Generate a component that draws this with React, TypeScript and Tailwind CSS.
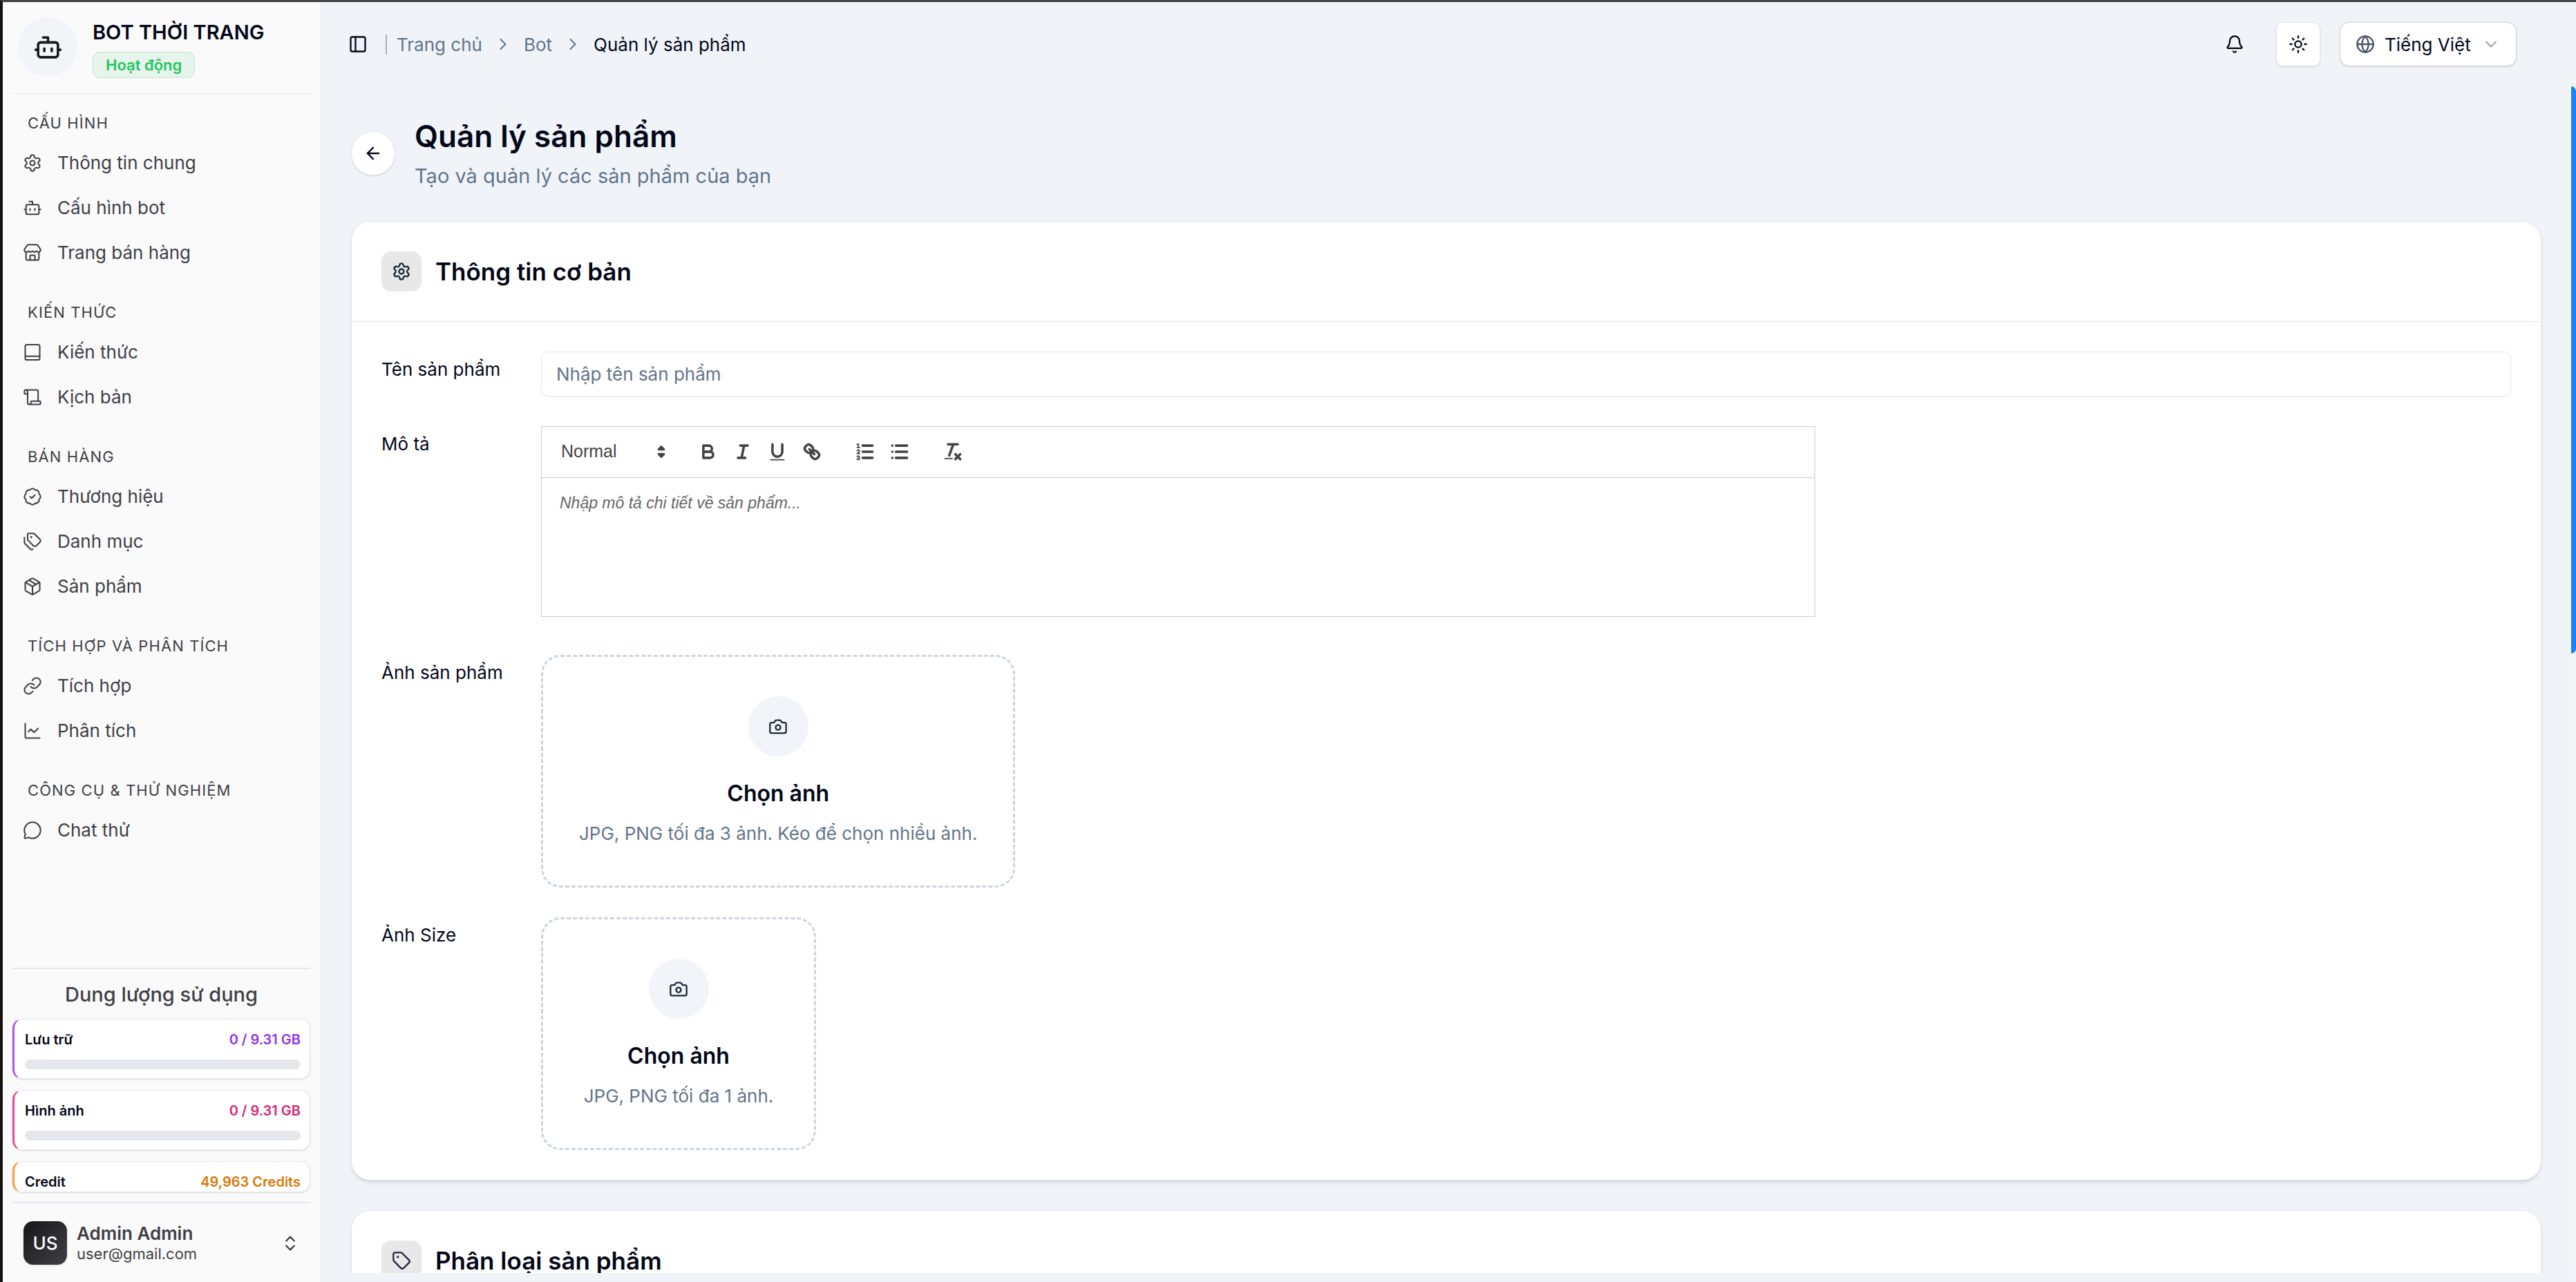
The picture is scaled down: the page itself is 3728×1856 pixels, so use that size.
import type { ReactNode } from "react";
import {
  ArrowLeft,
  BadgeCheck,
  Bell,
  Book,
  Bot,
  Camera,
  ChartLine,
  ChevronDown,
  ChevronRight,
  ChevronsUpDown,
  Globe,
  Link as LinkIcon,
  MessageCircle,
  Package,
  PanelLeft,
  Scroll,
  Settings,
  Store,
  Sun,
  Tag,
  Tags,
  type LucideIcon,
} from "lucide-react";

type NavItem = { label: string; icon: LucideIcon };

const navGroups: { title: string; items: NavItem[] }[] = [
  {
    title: "CẤU HÌNH",
    items: [
      { label: "Thông tin chung", icon: Settings },
      { label: "Cấu hình bot", icon: Bot },
      { label: "Trang bán hàng", icon: Store },
    ],
  },
  {
    title: "KIẾN THỨC",
    items: [
      { label: "Kiến thức", icon: Book },
      { label: "Kịch bản", icon: Scroll },
    ],
  },
  {
    title: "BÁN HÀNG",
    items: [
      { label: "Thương hiệu", icon: BadgeCheck },
      { label: "Danh mục", icon: Tags },
      { label: "Sản phẩm", icon: Package },
    ],
  },
  {
    title: "TÍCH HỢP VÀ PHÂN TÍCH",
    items: [
      { label: "Tích hợp", icon: LinkIcon },
      { label: "Phân tích", icon: ChartLine },
    ],
  },
  {
    title: "CÔNG CỤ & THỬ NGHIỆM",
    items: [{ label: "Chat thử", icon: MessageCircle }],
  },
];

/* Book with a straight spine line, used for the knowledge entry. */
function BookGlyph({ className }: { className?: string }) {
  return (
    <svg viewBox="0 0 24 24" fill="none" stroke="currentColor" strokeWidth={1.75} strokeLinecap="round" strokeLinejoin="round" className={className} aria-hidden="true">
      <rect x="3" y="2.5" width="18" height="19" rx="2" />
      <path d="M3.5 17H20.5" />
    </svg>
  );
}

function NavLink({ item }: { item: NavItem }) {
  const Icon = item.icon;
  return (
    <a href="#" className="flex h-[65px] items-center gap-[22px] pl-[15px] text-[26px] text-[#3f3f46]">
      {item.icon === Book ? <BookGlyph className="size-7 shrink-0" /> : <Icon className="size-7 shrink-0" strokeWidth={1.75} />}
      <span>{item.label}</span>
    </a>
  );
}

function UsageCard({ label, value, accent, valueColor }: { label: string; value: string; accent: string; valueColor: string }) {
  return (
    <div className={`rounded-[14px] border border-l-[3px] border-[#e2e8f0] bg-white pt-[14px] pr-[13px] pb-[13px] pl-[15px] shadow-sm ${accent}`}>
      <div className="flex items-center justify-between text-xl leading-[30px] font-semibold">
        <span className="text-[#020617]">{label}</span>
        <span className={valueColor}>{value}</span>
      </div>
      <div className="mt-[14px] h-[14px] rounded-full bg-[#e5e7eb]" />
    </div>
  );
}

function Sidebar() {
  return (
    <aside className="flex w-[461px] shrink-0 flex-col border-r border-[#e2e8f0] bg-[#fafafa] pr-[15px] pl-[14px]">
      <div className="flex items-center gap-[22px] border-b border-[#e4e6e8] px-2 pt-5 pb-[22px]">
        <span className="grid size-[86px] place-items-center rounded-full bg-[#f1f5f9] text-[#18181b]">
          <Bot className="size-[43px]" />
        </span>
        <div className="flex flex-col items-start gap-1">
          <h2 className="text-[29px] leading-[48px] font-semibold text-[#020617]">BOT THỜI TRANG</h2>
          <span className="flex h-[38px] items-center rounded-[10px] border border-[#bfe9cc] bg-[#e7f4ec] px-[18px] text-[22px] font-semibold text-[#22c55e]">
            Hoạt động
          </span>
        </div>
      </div>

      <nav className="flex min-h-0 flex-1 flex-col gap-[29px] overflow-hidden pt-[17px]">
        {navGroups.map((group) => (
          <section key={group.title}>
            <h3 className="pl-[22px] text-[22px] leading-[50px] tracking-wider text-[#3f3f46]">{group.title}</h3>
            {group.items.map((item) => (
              <NavLink key={item.label} item={item} />
            ))}
          </section>
        ))}
      </nav>

      <section className="border-t-2 border-[#e3e6ea] pt-[19px]">
        <h3 className="mb-[17px] text-center text-[29px] leading-9 font-medium text-[#3f3f46]">Dung lượng sử dụng</h3>
        <div className="flex flex-col gap-4">
          <UsageCard label="Lưu trữ" value="0 / 9.31 GB" accent="border-l-[#a855f7]" valueColor="text-[#9333ea]" />
          <UsageCard label="Hình ảnh" value="0 / 9.31 GB" accent="border-l-[#ec4899]" valueColor="text-[#db2777]" />
          <div className="h-[45px] rounded-[14px] border border-l-[3px] border-[#e2e8f0] border-l-[#fb9d3c] bg-white pt-[14px] pr-[13px] pl-[15px] shadow-sm">
            <div className="flex items-center justify-between text-xl leading-[30px] font-semibold">
              <span className="text-[#020617]">Credit</span>
              <span className="text-[#d97706]">49,963 Credits</span>
            </div>
          </div>
        </div>
      </section>

      <div className="mt-[14px] border-t-2 border-[#e2e8f0] pt-[26px] pb-[25px]">
        <button className="flex w-full items-center pr-[15px] pl-4 text-left text-[#3f3f46]">
          <span className="grid size-[63px] place-items-center rounded-[14px] bg-linear-to-br from-[#18181b] to-[#3f3f46] text-[26px] font-medium text-white shadow-sm">
            US
          </span>
          <span className="ml-[14px] flex flex-1 flex-col">
            <span className="text-[26px] leading-[30px] font-semibold">Admin Admin</span>
            <span className="text-[22px] leading-7">user@gmail.com</span>
          </span>
          <ChevronsUpDown className="size-7" />
        </button>
      </div>
    </aside>
  );
}

function TopBar() {
  return (
    <header className="flex h-[122px] shrink-0 items-center justify-between pr-[86px] pl-[39px]">
      <div className="flex items-center">
        <button aria-label="Thu gọn thanh bên" className="text-[#020617]">
          <PanelLeft className="size-7" />
        </button>
        <span className="mr-[14px] ml-[26px] h-[29px] w-[2px] bg-[#a3aebd]" />
        <nav aria-label="Breadcrumb" className="flex items-center gap-4 text-[26px] text-[#64748b]">
          <a href="#">Trang chủ</a>
          <ChevronRight className="size-7" strokeWidth={1.75} />
          <a href="#">Bot</a>
          <ChevronRight className="size-7" strokeWidth={1.75} />
          <span className="text-[#020617]">Quản lý sản phẩm</span>
        </nav>
      </div>
      <div className="flex items-center gap-7 text-[#020617]">
        <button aria-label="Thông báo" className="grid size-16 place-items-center">
          <Bell className="size-7" />
        </button>
        <button aria-label="Giao diện" className="grid size-16 place-items-center rounded-[10px] border border-[#e2e8f0] bg-white shadow-sm">
          <Sun className="size-7" />
        </button>
        <label className="flex h-16 w-64 items-center rounded-[14px] border border-[#d1d5db] bg-white px-[22px] shadow-sm">
          <Globe className="size-7 shrink-0 text-[#4b5563]" />
          <select aria-label="Ngôn ngữ" className="ml-[14px] min-w-0 flex-1 appearance-none bg-transparent text-[26px] outline-none">
            <option>Tiếng Việt</option>
          </select>
          <ChevronDown className="size-7 shrink-0 text-[#85878c]" strokeWidth={1.5} />
        </label>
      </div>
    </header>
  );
}

function CardHeader({ icon: Icon, title }: { icon: LucideIcon; title: string }) {
  return (
    <div className="flex items-center gap-5 p-[43px]">
      <span className="grid size-[58px] place-items-center rounded-[14px] bg-[#e8e8e9] text-[#1e293b]">
        <Icon className="size-7" />
      </span>
      <h2 className="text-[35px] leading-[44px] font-semibold text-[#020617]">{title}</h2>
    </div>
  );
}

function Field({ label, htmlFor, children }: { label: string; htmlFor: string; children: ReactNode }) {
  return (
    <div className="flex items-start">
      <label htmlFor={htmlFor} className="w-[231px] shrink-0 pt-2 text-[26px] leading-9 text-[#020617]">
        {label}
      </label>
      {children}
    </div>
  );
}

function Tool({ label, children }: { label: string; children: ReactNode }) {
  return (
    <button aria-label={label} className="grid h-[43px] w-[50px] place-items-center">
      <svg viewBox="0 0 18 18" className="size-8" fill="none" stroke="#444444" strokeWidth={2} strokeLinecap="round" strokeLinejoin="round">
        {children}
      </svg>
    </button>
  );
}

function Editor() {
  return (
    <div className="mb-3 w-full max-w-[1844px] border border-[#cccccc] font-['Liberation_Sans',Arial,sans-serif]">
      <div className="flex items-center gap-[27px] border-b border-[#cccccc] px-[14px] pt-[14px] pb-4">
        <label className="flex w-[175px] items-center pl-[14px]">
          <select aria-label="Kiểu chữ" className="min-w-0 flex-1 appearance-none bg-transparent text-[25px] text-[#444444] outline-none">
            <option>Normal</option>
          </select>
          <svg viewBox="0 0 18 18" className="size-8 shrink-0" fill="#444444" stroke="#444444" strokeWidth={2} strokeLinecap="round" strokeLinejoin="round" aria-hidden="true">
            <polygon points="7 11 9 13 11 11 7 11" />
            <polygon points="7 7 9 5 11 7 7 7" />
          </svg>
        </label>
        <div className="flex">
          <Tool label="Đậm">
            <path d="M5,4H9.5A2.5,2.5,0,0,1,12,6.5v0A2.5,2.5,0,0,1,9.5,9H5V4Z" />
            <path d="M5,9h5.5A2.5,2.5,0,0,1,13,11.5v0A2.5,2.5,0,0,1,10.5,14H5V9Z" />
          </Tool>
          <Tool label="Nghiêng">
            <path d="M7 4H13M5 14H11M8 14L10 4" />
          </Tool>
          <Tool label="Gạch chân">
            <path d="M5,3V9a4.012,4.012,0,0,0,4,4H9a4.012,4.012,0,0,0,4-4V3" />
            <rect x="3" y="15" width="12" height="1" rx="0.5" fill="#444444" stroke="none" />
          </Tool>
          <Tool label="Liên kết">
            <path d="M7 7L11 11" />
            <path d="M8.9,4.577a3.476,3.476,0,0,1,.36,4.679A3.476,3.476,0,0,1,4.577,8.9C3.185,7.5,2.035,6.4,4.217,4.217S7.5,3.185,8.9,4.577Z" />
            <path d="M13.423,9.1a3.476,3.476,0,0,0-4.679-.36,3.476,3.476,0,0,0,.36,4.679c1.392,1.392,2.5,2.542,4.679.36S14.815,10.5,13.423,9.1Z" />
          </Tool>
        </div>
        <div className="flex">
          <Tool label="Danh sách số">
            <path d="M7 4H15M7 9H15M7 14H15" />
            <path strokeWidth={1} d="M2.5 5.5H4.5M2.5 3L3.5 2.5V5.5" />
            <path strokeWidth={1} d="M4.5,10.5h-2c0-.234,1.85-1.076,1.85-2.234A0.959,0.959,0,0,0,2.5,8.156" />
            <path strokeWidth={1} d="M2.5,14.846a0.959,0.959,0,0,0,1.85-.109A0.7,0.7,0,0,0,3.75,14a0.688,0.688,0,0,0,.6-0.736,0.959,0.959,0,0,0-1.85-.109" />
          </Tool>
          <Tool label="Danh sách chấm">
            <path d="M6 4H15M6 9H15M6 14H15M3 4H3M3 9H3M3 14H3" />
          </Tool>
        </div>
        <Tool label="Xóa định dạng">
          <path d="M5 3H13M6 12L9.35 3M11 11L15 15M15 11L11 15" />
          <rect x="2" y="14" width="7" height="1" rx="0.5" fill="#444444" stroke="none" />
        </Tool>
      </div>
      <textarea
        id="description"
        placeholder="Nhập mô tả chi tiết về sản phẩm..."
        className="block h-[200px] w-full resize-none bg-transparent px-[26px] py-5 text-[23px] leading-[33px] outline-none placeholder:text-[#666666] placeholder:italic"
      />
    </div>
  );
}

function DropZone({ id, hint }: { id: string; hint: string }) {
  return (
    <button id={id} className="flex min-w-[398px] flex-col items-center rounded-[28px] border-[3px] border-dashed border-[#cbd5e1] px-[52px] py-[57px]">
      <span className="grid size-[87px] place-items-center rounded-full bg-[#f1f5f9] text-[#1e293b]">
        <Camera className="size-7" />
      </span>
      <span className="mt-[29px] text-[32px] leading-[50px] font-semibold text-[#020617]">Chọn ảnh</span>
      <span className="mt-[14px] text-[26px] leading-[37px] text-[#64748b]">{hint}</span>
    </button>
  );
}

export default function App() {
  return (
    <div className="flex h-screen overflow-hidden border-t-[3px] border-l-4 border-t-[#444444] border-l-[#14120f] bg-[#f0f4f9] font-['Inter',sans-serif]">
      <Sidebar />
      <div className="flex min-w-0 flex-1 flex-col">
        <TopBar />
        <div className="mb-[13px] flex min-h-0 flex-1">
          <main className="min-w-0 flex-1 overflow-hidden px-[43px]">
            <div className="flex items-center gap-7 pt-[46px] pb-[47px]">
              <button aria-label="Quay lại" className="grid size-16 place-items-center rounded-full border border-[#e6ebf2] bg-white text-[#020617] shadow-sm">
                <ArrowLeft className="size-7" />
              </button>
              <div className="flex flex-col gap-[14px]">
                <h1 className="text-[44px] leading-[52px] font-semibold text-[#020617]">Quản lý sản phẩm</h1>
                <p className="text-[29px] leading-9 text-[#64748b]">Tạo và quản lý các sản phẩm của bạn</p>
              </div>
            </div>

            <div className="flex flex-col gap-[43px]">
              <section className="rounded-[28px] border border-[#e2e8f0] bg-white shadow-md">
                <CardHeader icon={Settings} title="Thông tin cơ bản" />
                <div className="flex flex-col gap-[43px] border-t border-[#e2e8f0] p-[43px]">
                  <Field label="Tên sản phẩm" htmlFor="name">
                    <input
                      id="name"
                      type="text"
                      placeholder="Nhập tên sản phẩm"
                      className="h-[65px] min-w-0 flex-1 rounded-[10px] border border-[#e2e8f0] px-[21px] text-[26px] shadow-xs outline-none placeholder:text-[#64748b]"
                    />
                  </Field>
                  <Field label="Mô tả" htmlFor="description">
                    <Editor />
                  </Field>
                  <Field label="Ảnh sản phẩm" htmlFor="images">
                    <DropZone id="images" hint="JPG, PNG tối đa 3 ảnh. Kéo để chọn nhiều ảnh." />
                  </Field>
                  <Field label="Ảnh Size" htmlFor="size-image">
                    <DropZone id="size-image" hint="JPG, PNG tối đa 1 ảnh." />
                  </Field>
                </div>
              </section>

              <section className="rounded-[28px] border border-[#e2e8f0] bg-white shadow-md">
                <CardHeader icon={Tag} title="Phân loại sản phẩm" />
              </section>
            </div>
          </main>
          <div className="w-[7px] shrink-0 bg-[#f3f4f5]">
            <div className="h-[821px] rounded-r-[7px] bg-[#1a82fb]" />
          </div>
        </div>
      </div>
    </div>
  );
}
